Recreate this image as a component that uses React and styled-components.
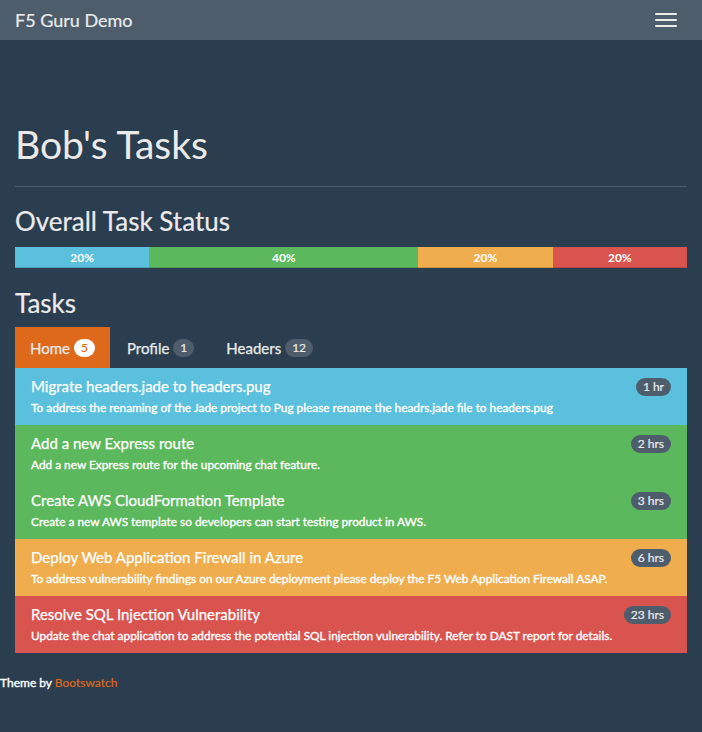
import React from "react";
import styled, { createGlobalStyle } from "styled-components";

const Global = createGlobalStyle`
  html, body { margin: 0; padding: 0; background: #2b3e50; }
  body {
    font-family: Lato, "Helvetica Neue", Arial, sans-serif;
    font-size: 15px;
    color: #ebebeb;
    -webkit-font-smoothing: antialiased;
  }
  * { box-sizing: border-box; }
`;

const Navbar = styled.nav`
  height: 40px;
  background: #4e5d6c;
  display: flex;
  align-items: center;
  justify-content: space-between;
  padding: 0 15px;
`;

const Brand = styled.a`
  font-size: 18px;
  line-height: 21px;
  color: #ebebeb;
  text-decoration: none;
  -webkit-text-stroke: 0.2px #ebebeb;
`;

const Toggle = styled.button`
  background: transparent;
  border: 0;
  padding: 0 10px;
  display: flex;
  flex-direction: column;
  gap: 4px;
  cursor: pointer;
`;

const IconBar = styled.span`
  display: block;
  width: 22px;
  height: 2px;
  border-radius: 1px;
  background: #ebebeb;
`;

const Container = styled.main`
  padding: 0 15px;
`;

const PageHeader = styled.div`
  margin-top: 83px;
  padding-bottom: 20px;
  border-bottom: 1px solid #4e5d6c;
`;

const H1 = styled.h1`
  margin: 0;
  font-size: 39px;
  line-height: 43px;
  font-weight: 400;
  color: #ebebeb;
`;

const H3 = styled.h3`
  margin: ${(p) => p.$top}px 0 ${(p) => p.$bottom}px;
  font-size: 26px;
  line-height: 29px;
  font-weight: 400;
  color: #ebebeb;
  -webkit-text-stroke: 0.2px #ebebeb;
`;

const Progress = styled.div`
  display: flex;
  height: 21px;
  margin-bottom: 21px;
  overflow: hidden;
`;

const colors = {
  info: "#5bc0de",
  success: "#5cb85c",
  warning: "#f0ad4e",
  danger: "#d9534f",
};

const Bar = styled.div`
  flex: ${(p) => p.$pct} 0 0;
  background: ${(p) => colors[p.$kind]};
  color: #fff;
  font-size: 12px;
  font-weight: 700;
  line-height: 21px;
  text-align: center;
  box-shadow: inset 0 -1px 0 rgba(0, 0, 0, 0.15);
`;

const Tabs = styled.ul`
  list-style: none;
  margin: 0;
  padding: 0;
  display: flex;
  gap: 2px;
`;

const Tab = styled.li`
  height: 41px;
  padding: 0 15px;
  display: flex;
  align-items: center;
  gap: 4px;
  font-size: 15px;
  color: #ebebeb;
  -webkit-text-stroke: 0.25px #ebebeb;
  background: ${(p) => (p.$active ? "#df691a" : "transparent")};
`;

const Badge = styled.span`
  display: inline-block;
  flex-shrink: 0;
  white-space: nowrap;
  min-width: 10px;
  padding: 3px 7px;
  font-size: 12px;
  font-weight: 400;
  line-height: 12px;
  border-radius: 10px;
  text-align: center;
  -webkit-text-stroke: 0.2px currentColor;
  color: ${(p) => (p.$light ? "#df691a" : "#ebebeb")};
  background: ${(p) => (p.$light ? "#fff" : "#4e5d6c")};
`;

const List = styled.div`
  display: flex;
  flex-direction: column;
`;

const Item = styled.div`
  height: 57px;
  padding: 10px 16px;
  background: ${(p) => colors[p.$kind]};
  display: flex;
  justify-content: space-between;
  align-items: flex-start;
  gap: 8px;
`;

const ItemBody = styled.div`
  display: flex;
  flex-direction: column;
  min-width: 0;
`;

const ItemTitle = styled.h4`
  margin: 0 0 5px;
  font-size: 15px;
  line-height: 17px;
  font-weight: 400;
  color: #fff;
  -webkit-text-stroke: 0.25px #fff;
  white-space: nowrap;
`;

const ItemText = styled.p`
  margin: 0;
  font-size: 11.85px;
  line-height: 15px;
  font-weight: 400;
  color: #fff;
  -webkit-text-stroke: 0.35px #fff;
  white-space: nowrap;
`;

const Footer = styled.footer`
  margin-top: 21px;
  font-size: 12px;
  line-height: 18px;
  font-weight: 400;
  color: #fff;
  -webkit-text-stroke: 0.35px #fff;
`;

const Link = styled.a`
  color: #df691a;
  -webkit-text-stroke: 0.2px #df691a;
  text-decoration: none;
`;

const tasks = [
  { kind: "info", title: "Migrate headers.jade to headers.pug", text: "To address the renaming of the Jade project to Pug please rename the headrs.jade file to headers.pug", time: "1 hr" },
  { kind: "success", title: "Add a new Express route", text: "Add a new Express route for the upcoming chat feature.", time: "2 hrs" },
  { kind: "success", title: "Create AWS CloudFormation Template", text: "Create a new AWS template so developers can start testing product in AWS.", time: "3 hrs" },
  { kind: "warning", title: "Deploy Web Application Firewall in Azure", text: "To address vulnerability findings on our Azure deployment please deploy the F5 Web Application Firewall ASAP.", time: "6 hrs" },
  { kind: "danger", title: "Resolve SQL Injection Vulnerability", text: "Update the chat application to address the potential SQL injection vulnerability. Refer to DAST report for details.", time: "23 hrs" },
];

const bars = [
  { kind: "info", pct: 20 },
  { kind: "success", pct: 40 },
  { kind: "warning", pct: 20 },
  { kind: "danger", pct: 20 },
];

export default function App() {
  return (
    <>
      <Global />
      <Navbar>
        <Brand href="#">F5 Guru Demo</Brand>
        <Toggle aria-label="Toggle navigation">
          <IconBar />
          <IconBar />
          <IconBar />
        </Toggle>
      </Navbar>
      <Container>
        <PageHeader>
          <H1>Bob's Tasks</H1>
        </PageHeader>
        <H3 $top={20} $bottom={11}>Overall Task Status</H3>
        <Progress>
          {bars.map((b, i) => (
            <Bar key={i} $kind={b.kind} $pct={b.pct}>{b.pct}%</Bar>
          ))}
        </Progress>
        <H3 $top={0} $bottom={9}>Tasks</H3>
        <Tabs>
          <Tab $active>Home <Badge $light>5</Badge></Tab>
          <Tab>Profile <Badge>1</Badge></Tab>
          <Tab>Headers <Badge>12</Badge></Tab>
        </Tabs>
        <List>
          {tasks.map((t, i) => (
            <Item key={i} $kind={t.kind}>
              <ItemBody>
                <ItemTitle>{t.title}</ItemTitle>
                <ItemText>{t.text}</ItemText>
              </ItemBody>
              <Badge>{t.time}</Badge>
            </Item>
          ))}
        </List>
      </Container>
      <Footer>
        Theme by <Link href="#">Bootswatch</Link>
      </Footer>
    </>
  );
}
